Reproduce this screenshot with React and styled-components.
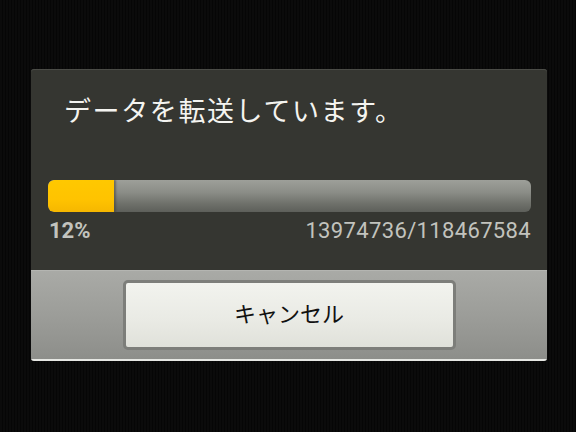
import React from "react";
import styled, { createGlobalStyle } from "styled-components";

const Global = createGlobalStyle`
  html, body { margin: 0; padding: 0; }
  body {
    background: #0a0a0a;
    width: 576px;
    height: 432px;
    overflow: hidden;
    font-family: Roboto, "Noto Sans CJK JP", sans-serif;
  }
`;

const Screen = styled.div`
  width: 576px;
  height: 432px;
  background: repeating-linear-gradient(90deg, #0b0b0b 0 2px, #060606 2px 3px);
  padding: 69px 0 0 31px;
  box-sizing: border-box;
`;

const Dialog = styled.div`
  width: 516px;
  border-radius: 3px;
  overflow: hidden;
  background: #353631;
  box-shadow: inset 0 1px 0 #4b4c47;
  display: flex;
  flex-direction: column;
`;

const TitleBar = styled.div`
  height: 84px;
  display: flex;
  align-items: center;
  padding: 0 0 4px 33px;
  box-sizing: border-box;
  color: #f4f4f0;
  font-family: "Noto Sans CJK JP", sans-serif;
  font-size: 27px;
  letter-spacing: 1.6px;
`;

const Body = styled.div`
  height: 117px;
  padding: 27px 16px 0 17px;
  box-sizing: border-box;
`;

const Track = styled.div`
  height: 32px;
  border-radius: 6px;
  overflow: hidden;
  background: linear-gradient(180deg, #9d9f99 0%, #8a8c86 40%, #6e706a 75%, #5d5f5a 100%);
  display: flex;
`;

const Fill = styled.div`
  height: 100%;
  border-radius: 6px 0 0 6px;
  background: linear-gradient(180deg, #ffc800 0%, #ffc300 60%, #f6b700 100%);
  box-shadow: 2px 0 2px rgba(60, 60, 55, 0.5);
`;

const Labels = styled.div`
  display: flex;
  justify-content: space-between;
  margin-top: 6px;
  font-family: Roboto, sans-serif;
  font-size: 22px;
  line-height: 26px;
  color: #c2c3be;
`;

const Percent = styled.span`
  font-weight: 700;
  padding-left: 1px;
`;

const Count = styled.span`
  font-weight: 400;
  letter-spacing: 0.35px;
`;

const ButtonBar = styled.div`
  height: 91px;
  background: linear-gradient(180deg, #a9aaa6 0%, #9c9d99 50%, #8d8e8a 100%);
  border-top: 1px solid #b4b5b1;
  border-bottom: 2px solid #e6e7e3;
  box-sizing: border-box;
  display: flex;
  justify-content: center;
  padding-top: 9px;
`;

const Button = styled.button`
  width: 333px;
  height: 70px;
  border: 3px solid #7d7e7a;
  border-radius: 5px;
  background: linear-gradient(180deg, #f2f3ee 0%, #e9eae4 60%, #e0e1da 100%);
  font-family: "Noto Sans CJK JP", sans-serif;
  font-size: 22px;
  color: #111;
  padding: 0 0 6px 0;
  cursor: pointer;
`;

export default function App() {
  const done = 13974736;
  const total = 118467584;
  return (
    <>
      <Global />
      <Screen>
        <Dialog>
          <TitleBar>データを転送しています。</TitleBar>
          <Body>
            <Track>
              <Fill style={{ width: "66px" }} />
            </Track>
            <Labels>
              <Percent>{Math.round((done / total) * 100)}%</Percent>
              <Count>
                {done}/{total}
              </Count>
            </Labels>
          </Body>
          <ButtonBar>
            <Button>キャンセル</Button>
          </ButtonBar>
        </Dialog>
      </Screen>
    </>
  );
}
